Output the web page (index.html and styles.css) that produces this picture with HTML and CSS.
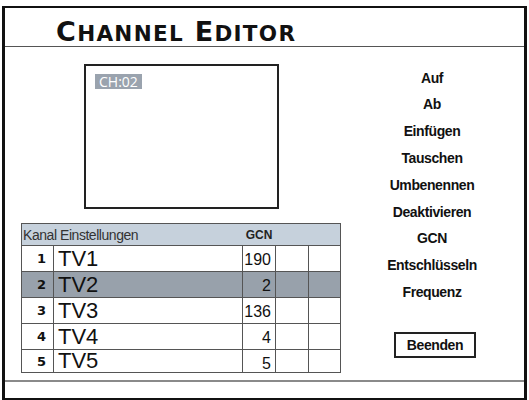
FILE: index.html
```html
<!DOCTYPE html>
<html>
<head>
<meta charset="utf-8">
<link rel="stylesheet" href="styles.css">
</head>
<body>
<div class="frame">
  <div class="header"><h1 class="title"><span class="cap">C</span><span class="sm">HANNEL</span> <span class="cap">E</span><span class="sm">DITOR</span></h1></div>
  <div class="main">
    <div class="left">
      <div class="preview"><span class="ch">CH:02</span></div>
      <table class="list">
        <colgroup>
          <col class="c-num"><col class="c-name"><col class="c-gcn"><col class="c-x"><col class="c-x2">
        </colgroup>
        <tr class="head">
          <td colspan="2" class="h-name">Kanal Einstellungen</td>
          <td class="h-gcn">GCN</td>
          <td colspan="2"></td>
        </tr>
        <tr class="r1"><td class="num">1</td><td class="name">TV1</td><td class="gcn">190</td><td></td><td></td></tr>
        <tr class="r2 sel"><td class="num">2</td><td class="name">TV2</td><td class="gcn">2</td><td></td><td></td></tr>
        <tr class="r3"><td class="num">3</td><td class="name">TV3</td><td class="gcn">136</td><td></td><td></td></tr>
        <tr class="r4"><td class="num">4</td><td class="name">TV4</td><td class="gcn">4</td><td></td><td></td></tr>
        <tr class="r5"><td class="num">5</td><td class="name">TV5</td><td class="gcn">5</td><td></td><td></td></tr>
      </table>
    </div>
    <div class="menu">
      <div class="item">Auf</div>
      <div class="item">Ab</div>
      <div class="item">Einfügen</div>
      <div class="item">Tauschen</div>
      <div class="item">Umbenennen</div>
      <div class="item">Deaktivieren</div>
      <div class="item">GCN</div>
      <div class="item">Entschlüsseln</div>
      <div class="item">Frequenz</div>
      <div class="btn">Beenden</div>
    </div>
  </div>
  <div class="footer"></div>
</div>
</body>
</html>
```

FILE: styles.css
```css
html, body {
  margin: 0;
  padding: 0;
  background: #fff;
}
body {
  width: 529px;
  height: 400px;
  overflow: hidden;
  font-family: "Liberation Sans", Arial, sans-serif;
}
.frame {
  box-sizing: border-box;
  margin: 6px 0 0 2px;
  width: 525px;
  height: 394px;
  border-left: 3px solid #111;
  border-right: 3px solid #111;
  border-top: 2px solid #111;
  border-bottom: 2px solid #111;
  display: flex;
  flex-direction: column;
}
.header {
  height: 39px;
  box-sizing: border-box;
  border-bottom: 1px solid #555;
  padding: 5px 0 0 51px;
  flex: none;
}
.title {
  margin: 0;
  font-family: "DejaVu Sans", sans-serif;
  font-weight: 700;
  font-size: 27px;
  line-height: 38px;
  color: #111;
  letter-spacing: 1.3px;
}
.title .sm {
  font-size: 21.5px;
}
.main {
  height: 333px;
  flex: none;
  display: flex;
  border-bottom: 2px solid #8a8a8a;
}
.left {
  width: 335px;
  flex: none;
  padding-top: 17px;
  box-sizing: border-box;
}
.preview {
  box-sizing: border-box;
  margin-left: 79px;
  width: 195px;
  height: 145px;
  border: 2px solid #222;
  padding: 7px 0 0 9px;
}
.ch {
  display: inline-block;
  background: #9aa3ae;
  color: #fff;
  font-family: "Open Sans", sans-serif;
  font-size: 14px;
  line-height: 15px;
  padding: 0 4px;
}
.list {
  margin: 14px 0 0 16px;
  border-collapse: collapse;
  table-layout: fixed;
  width: 319px;
  border: 1px solid #555;
}
.c-num { width: 32px; }
.c-name { width: 189px; }
.c-gcn { width: 33px; }
.c-x { width: 33px; }
.c-x2 { width: 32px; }
.list td {
  padding: 0;
  border: 1px solid #555;
  color: #111;
  line-height: 1;
}
.head td {
  background: #c6d1dc;
  height: 20px;
  border-left: none;
  border-right: none;
  vertical-align: middle;
}
.list td.h-name {
  font-size: 14px;
  letter-spacing: -0.45px;
  color: #333;
  padding: 1px 0 0 1px;
}
.list td.h-gcn {
  font-weight: bold;
  font-size: 12px;
  text-align: center;
  color: #222;
}
.list tr:not(.head) td {
  height: 22px;
}
.list tr.r5 td {
  height: 20px;
}
.sel td {
  background: #98a1ab;
}
.list td.num {
  text-align: right;
  padding-right: 7px;
  font-family: "DejaVu Sans", sans-serif;
  font-weight: bold;
  font-size: 13px;
  vertical-align: middle;
}
.list td.name {
  font-size: 22px;
  padding-left: 4px;
  vertical-align: middle;
}
.list td.gcn {
  text-align: right;
  font-size: 16px;
  vertical-align: bottom;
  padding: 0 4px 3px 0;
}
.list .r5 td.gcn {
  padding-bottom: 0;
}
.menu {
  flex: 1;
  display: flex;
  flex-direction: column;
  align-items: center;
  padding-top: 17.6px;
  box-sizing: border-box;
}
.item {
  font-weight: bold;
  font-size: 14px;
  letter-spacing: -0.4px;
  line-height: 26.8px;
  color: #111;
}
.btn {
  margin-top: 26px;
  margin-left: 6px;
  box-sizing: border-box;
  width: 82px;
  height: 26px;
  border: 2px solid #222;
  font-weight: bold;
  font-size: 14px;
  letter-spacing: -0.4px;
  line-height: 22px;
  text-align: center;
  color: #111;
}
.footer {
  flex: 1;
}
```
